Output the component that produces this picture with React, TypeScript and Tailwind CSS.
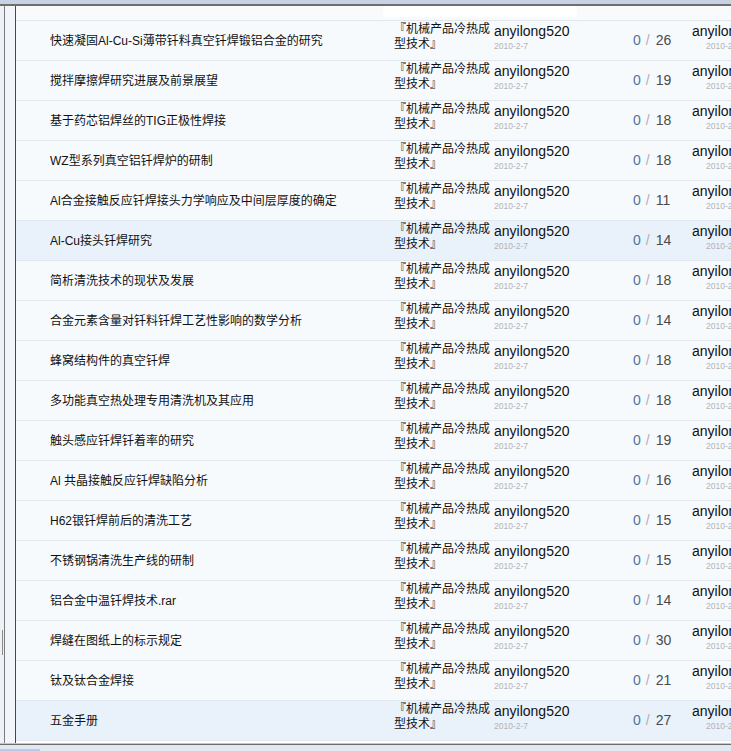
const rows: { title: string; replies: number; active?: boolean }[] = [
  { title: '快速凝固Al-Cu-Si薄带钎料真空钎焊锻铝合金的研究', replies: 26 },
  { title: '搅拌摩擦焊研究进展及前景展望', replies: 19 },
  { title: '基于药芯铝焊丝的TIG正极性焊接', replies: 18 },
  { title: 'WZ型系列真空铝钎焊炉的研制', replies: 18 },
  { title: 'Al合金接触反应钎焊接头力学响应及中间层厚度的确定', replies: 11 },
  { title: 'Al-Cu接头钎焊研究', replies: 14, active: true },
  { title: '简析清洗技术的现状及发展', replies: 18 },
  { title: '合金元素含量对钎料钎焊工艺性影响的数学分析', replies: 14 },
  { title: '蜂窝结构件的真空钎焊', replies: 18 },
  { title: '多功能真空热处理专用清洗机及其应用', replies: 18 },
  { title: '触头感应钎焊钎着率的研究', replies: 19 },
  { title: 'Al 共晶接触反应钎焊缺陷分析', replies: 16 },
  { title: 'H62银钎焊前后的清洗工艺', replies: 15 },
  { title: '不锈钢锅清洗生产线的研制', replies: 15 },
  { title: '铝合金中温钎焊技术.rar', replies: 14 },
  { title: '焊缝在图纸上的标示规定', replies: 30 },
  { title: '钛及钛合金焊接', replies: 21 },
  { title: '五金手册', replies: 27, active: true },
];

const font = "font-['Liberation_Sans','Noto_Sans_CJK_SC',sans-serif]";

function Row({ title, replies, active }: { title: string; replies: number; active?: boolean }) {
  return (
    <div
      className={`flex h-[40px] shrink-0 border-b border-[#e1e7ee] ${active ? 'bg-[#e9f1fb]' : 'bg-[#f7fafd]'}`}
    >
      <div className="w-[378px] shrink-0 pl-[34px] flex items-center text-[12px] text-[#111] whitespace-nowrap">
        {title}
      </div>
      <div className="w-[100px] shrink-0 pt-[1px] text-[12px] leading-[15px] text-[#111]">
        『机械产品冷热成型技术』
      </div>
      <div className="w-[139px] shrink-0 pt-[2px] flex flex-col">
        <span className="text-[14px] leading-[16px] text-[#111]">anyilong520</span>
        <span className="mt-[1px] text-[8.5px] leading-[12px] text-[#b3b3b3]">2010-2-7</span>
      </div>
      <div className="w-[59px] shrink-0 flex items-center text-[14px] whitespace-nowrap">
        <span className="text-[#4b74a3]">0</span>
        <span className="ml-[5px] text-[#b0b0b0]">/</span>
        <span className="ml-[6px] text-[#4a4a4a]">{replies}</span>
      </div>
      <div className="flex-1 min-w-0 pt-[2px] flex flex-col overflow-hidden whitespace-nowrap">
        <span className="text-[14px] leading-[16px] text-[#111]">anyilong520</span>
        <span className="mt-[1px] pl-[14px] text-[8.5px] leading-[12px] text-[#b3b3b3]">2010-2-7 10:20</span>
      </div>
    </div>
  );
}

export default function App() {
  return (
    <div className={`w-[731px] h-[751px] overflow-hidden flex flex-col bg-[#e3e9f1] ${font}`}>
      <div className="h-[4px] shrink-0 bg-[#c7d3e4]" />
      <div className="h-[2px] shrink-0 bg-[#6f6f6f]" />

      <div className="h-[737px] shrink-0 flex">
        {/* window frame, left side */}
        <div className="w-[4px] shrink-0 bg-[#eef2f7]">
          <div className="mt-[624px] ml-[2px] w-[1px] h-[25px] bg-[#8a8a8a]" />
        </div>
        <div className="w-[1px] shrink-0 bg-[#7c7c7c]" />
        <div className="w-[10px] shrink-0 bg-[#f2f5f9]" />
        <div className="w-[1px] shrink-0 bg-[#474747]" />

        <div className="flex-1 min-w-0 flex flex-col bg-white">
          <div className="h-[15px] shrink-0 flex border-b border-[#e1e7ee] bg-[#f8fafc]">
            <div className="w-[367px] shrink-0" />
            <div className="w-[194px] h-[11px] bg-white" />
          </div>
          {rows.map((r, i) => (
            <Row key={i} {...r} />
          ))}
        </div>
      </div>

      <div className="h-[1px] shrink-0 bg-[#b7c8e3]" />
      <div className="h-[1px] shrink-0 bg-[#6c6c6c]" />
      <div className="flex-1 flex items-end">
        <div className="w-[40px] h-[2px] bg-[#b9cbe6]" />
      </div>
    </div>
  );
}
